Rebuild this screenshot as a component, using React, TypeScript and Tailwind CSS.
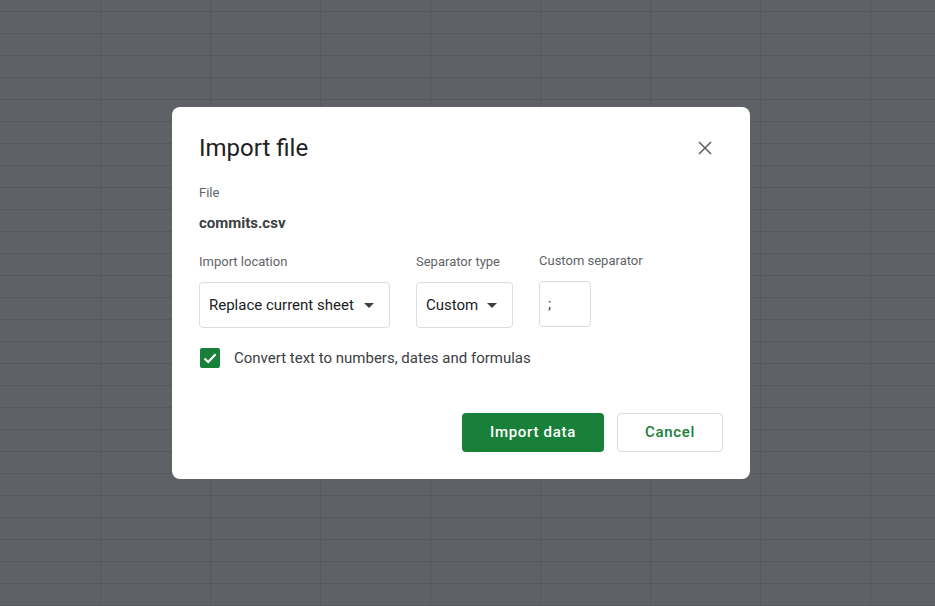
import React from "react";

const font = { fontFamily: "Roboto, 'Noto Sans', Arial, sans-serif" };

function Caret() {
  return (
    <svg width="10" height="5" viewBox="0 0 10 5" className="shrink-0">
      <path d="M0 0 L10 0 L5 5 Z" fill="#3c4043" />
    </svg>
  );
}

export default function App() {
  return (
    <div
      className="min-h-[606px] w-full bg-[#5e6166] bg-[image:linear-gradient(to_right,#55585d_1px,transparent_1px),linear-gradient(to_bottom,#55585d_1px,transparent_1px)] bg-[size:110px_22px] bg-[position:100px_11px] pl-[172px] pt-[107px]"
      style={font}
    >
      <div className="flex w-[578px] flex-col rounded-lg bg-white px-[27px] pt-[25px] pb-[27px]">
        {/* header */}
        <div className="flex h-8 items-center justify-between">
          <h1 className="text-[24px] leading-8 font-normal text-[#202124]">Import file</h1>
          <button className="mr-[6px] flex h-6 w-6 items-center justify-center">
            <svg width="14" height="14" viewBox="0 0 14 14">
              <path d="M1 1 L13 13 M13 1 L1 13" stroke="#5f6368" strokeWidth="1.6" />
            </svg>
          </button>
        </div>

        <div className="mt-[21px] text-[13px] leading-4 text-[#5f6368]">File</div>
        <div className="mt-[12px] text-[15px] leading-5 font-bold text-[#3c4043]">commits.csv</div>

        <div className="mt-[21px] flex gap-[26px]">
          <div className="flex flex-col">
            <div className="text-[13px] leading-4 text-[#5f6368]">Import location</div>
            <div className="mt-3 flex h-[46px] w-[191px] items-center justify-between rounded border border-[#dadce0] pr-[15px] pl-[9px]">
              <span className="text-[15px] text-[#202124]">Replace current sheet</span>
              <Caret />
            </div>
          </div>
          <div className="flex flex-col">
            <div className="text-[13px] leading-4 text-[#5f6368]">Separator type</div>
            <div className="mt-3 flex h-[46px] w-[97px] items-center justify-between rounded border border-[#dadce0] pr-[15px] pl-[9px]">
              <span className="text-[15px] text-[#202124]">Custom</span>
              <Caret />
            </div>
          </div>
          <div className="-mt-px flex flex-col">
            <div className="text-[13px] leading-4 text-[#5f6368]">Custom separator</div>
            <div className="mt-3 flex h-[46px] w-[52px] items-center rounded border border-[#dadce0] pl-[8px]">
              <span className="text-[15px] text-[#3c4043]">;</span>
            </div>
          </div>
        </div>

        <label className="mt-[19px] flex items-center gap-[14px]">
          <span className="ml-px flex h-5 w-5 items-center justify-center rounded-[2px] bg-[#188038]">
            <svg width="16" height="16" viewBox="0 0 16 16">
              <path d="M2.5 8.5 L6.2 12 L13.6 4.2" stroke="white" strokeWidth="2.2" fill="none" />
            </svg>
          </span>
          <span className="text-[15px] text-[#3c4043]">Convert text to numbers, dates and formulas</span>
        </label>

        <div className="mt-[43px] flex justify-end gap-[13px]">
          <button className="h-[39px] w-[142px] rounded bg-[#188038] text-[15px] font-medium tracking-[0.7px] text-white">
            Import data
          </button>
          <button className="h-[39px] w-[106px] rounded border border-[#dadce0] bg-white text-[15px] font-medium tracking-[0.7px] text-[#188038]">
            Cancel
          </button>
        </div>
      </div>
    </div>
  );
}
